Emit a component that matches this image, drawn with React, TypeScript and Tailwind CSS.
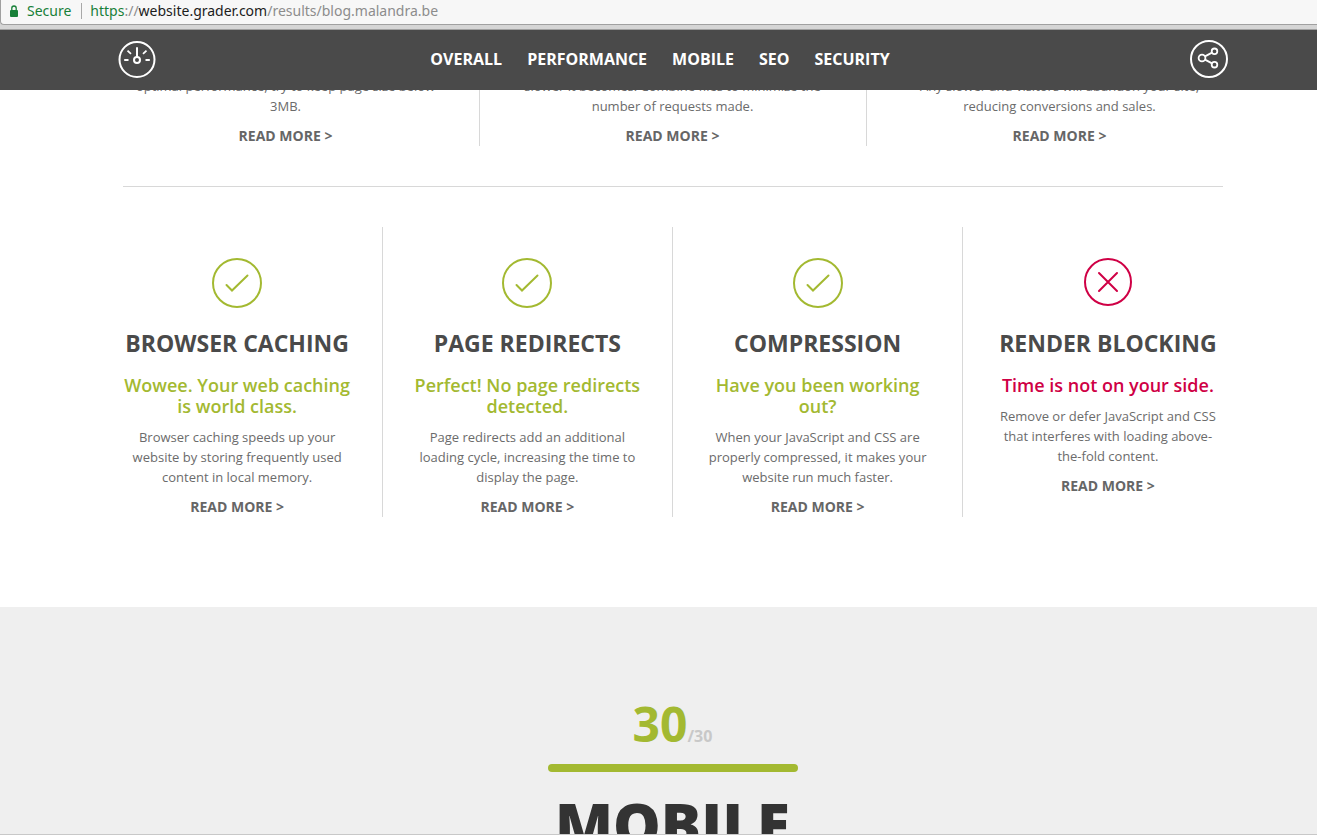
import type { ReactNode } from 'react';

interface CheckItem {
  title: string;
  verdict: string;
  text: string;
  passed: boolean;
}

const navItems = ['Overall', 'Performance', 'Mobile', 'SEO', 'Security'];

const summaries = [
  'optimal performance, try to keep page size below 3MB.',
  'slower it becomes. Combine files to minimize the number of requests made.',
  'Any slower and visitors will abandon your site, reducing conversions and sales.',
];

const checks: CheckItem[] = [
  {
    title: 'Browser Caching',
    verdict: 'Wowee. Your web caching is world class.',
    text: 'Browser caching speeds up your website by storing frequently used content in local memory.',
    passed: true,
  },
  {
    title: 'Page Redirects',
    verdict: 'Perfect! No page redirects detected.',
    text: 'Page redirects add an additional loading cycle, increasing the time to display the page.',
    passed: true,
  },
  {
    title: 'Compression',
    verdict: 'Have you been working out?',
    text: 'When your JavaScript and CSS are properly compressed, it makes your website run much faster.',
    passed: true,
  },
  {
    title: 'Render Blocking',
    verdict: 'Time is not on your side.',
    text: 'Remove or defer JavaScript and CSS that interferes with loading above-the-fold content.',
    passed: false,
  },
];

function LockIcon() {
  return (
    <svg width="10" height="12" viewBox="0 0 10 12" fill="none" aria-hidden="true">
      <rect x="1" y="5" width="8" height="7" rx="1" fill="#188038" />
      <path d="M2.8 5.5V3.2a2.2 2.2 0 0 1 4.4 0v2.3" stroke="#188038" strokeWidth="1.3" />
    </svg>
  );
}

function GaugeIcon() {
  return (
    <svg width="38" height="38" viewBox="0 -1 38 38" fill="none" stroke="#fff" strokeWidth="2" aria-hidden="true">
      <circle cx="19" cy="18.5" r="17.5" />
      <circle cx="19" cy="19" r="3" />
      <path d="M19 6.3V16" />
      <path d="M6.2 19h4.3M27.500 19h4.300M9.500 9.700l3.500 3.200M28.500 9.700L25 12.900" strokeWidth="1.8" />
    </svg>
  );
}

function ShareIcon() {
  return (
    <svg width="38" height="38" viewBox="0 0 38 38" fill="none" stroke="#fff" aria-hidden="true">
      <circle cx="19" cy="19" r="18" strokeWidth="2" />
      <g strokeWidth="1.8">
        <circle cx="12" cy="18" r="3.4" />
        <circle cx="24.5" cy="11.3" r="2.8" />
        <circle cx="24.5" cy="24.7" r="2.8" />
        <path d="M15 16.400l7-3.800M15 19.600l7 3.800" />
      </g>
    </svg>
  );
}

function PassIcon() {
  return (
    <svg width="50" height="50" viewBox="0 0 50 50" fill="none" stroke="#a3b931" strokeWidth="2" aria-hidden="true">
      <circle cx="25" cy="25" r="24" />
      <path d="M14.5 27l5.500 5.500L35.500 17.500" strokeLinecap="round" />
    </svg>
  );
}

function FailIcon() {
  return (
    <svg width="48" height="48" viewBox="0 0 48 48" fill="none" stroke="#cf0045" strokeWidth="2" aria-hidden="true">
      <circle cx="24" cy="24" r="23" />
      <path d="M15 15l18 18M33 15L15 33" strokeLinecap="round" />
    </svg>
  );
}

function AddressBar() {
  return (
    <div className="border-b border-[#a0a0a0] bg-[#d5d5d5] pb-1">
      <div className="flex h-[25px] items-center rounded-bl-sm border-b border-l border-[#a0a0a0] bg-[#f7f7f7] pb-[3px] pl-2 font-['Noto_Sans',sans-serif] text-sm leading-5">
        <LockIcon />
        <span className="ml-2 text-[#188038]">Secure</span>
        <span className="mr-2 ml-2.5 h-4 w-px bg-[#a8a8a8]" />
        <span className="text-[#8c8c8c]">
          <span className="text-[#188038]">https</span>://
          <span className="text-[#1c1c1c]">website.grader.com</span>/results/blog.malandra.be
        </span>
      </div>
    </div>
  );
}

function Header() {
  return (
    <header className="relative z-10 bg-[#4a4a4a] pl-7">
      <div className="mx-auto flex h-[60px] max-w-[1110px] items-center justify-between pb-0.5">
        <a href="#top" aria-label="Website Grader">
          <GaugeIcon />
        </a>
        <nav className="flex gap-[25px] pr-[25px]">
          {navItems.map((item) => (
            <a key={item} href={`#${item.toLowerCase()}`} className="text-base font-bold text-white uppercase">
              {item}
            </a>
          ))}
        </nav>
        <button type="button" aria-label="Share">
          <ShareIcon />
        </button>
      </div>
    </header>
  );
}

function Description({ children }: { children: ReactNode }) {
  return (
    <>
      <p className="text-[13px] leading-5 text-[#6b6b6b]">{children}</p>
      <a href="#more" className="mt-2.5 block text-sm leading-5 font-bold text-[#666] uppercase">
        Read more &gt;
      </a>
    </>
  );
}

function CheckColumn({ item }: { item: CheckItem }) {
  return (
    <article className="flex-1 border-r border-[#d8d8d8] px-[30px] pt-[31px] last:border-r-0">
      <div className="flex h-[50px] justify-center">{item.passed ? <PassIcon /> : <FailIcon />}</div>
      <h3 className="mt-5 text-[23px] leading-[30px] font-bold whitespace-nowrap text-[#4a4a4a] uppercase">
        {item.title}
      </h3>
      <p
        className={`mt-[17px] mb-2.5 text-lg leading-[21px] font-semibold ${
          item.passed ? 'text-[#a3b931]' : 'text-[#cf0045]'
        }`}
      >
        {item.verdict}
      </p>
      <Description>{item.text}</Description>
    </article>
  );
}

export default function App() {
  return (
    <div className="flex h-screen flex-col overflow-hidden border-b border-[#c8c8c8] bg-white font-['Open_Sans',sans-serif] text-center">
      <AddressBar />
      <Header />
      <main className="flex min-h-0 flex-1 flex-col">
        {/* the first row is scrolled partly under the header */}
        <section className="-mt-3.5 shrink-0 pb-[90px] pl-7">
          <div className="mx-auto flex max-w-[1160px]">
            {summaries.map((text) => (
              <div key={text} className="flex-1 border-r border-[#d8d8d8] px-[30px] last:border-r-0">
                <Description>{text}</Description>
              </div>
            ))}
          </div>
          <hr className="mx-auto my-10 max-w-[1100px] border-[#d8d8d8]" />
          <div className="mx-auto flex max-w-[1160px]">
            {checks.map((item) => (
              <CheckColumn key={item.title} item={item} />
            ))}
          </div>
        </section>
        <section id="mobile" className="min-h-0 flex-1 overflow-hidden bg-[#efefef] pt-[90px] pl-7">
          <p className="text-5xl leading-[54px] font-bold text-[#a3b931]">
            30<span className="text-base text-[#c8c8c8]">/30</span>
          </p>
          <div className="mx-auto mt-[13px] h-2 w-[250px] rounded-full bg-[#a3b931]" />
          <h2 className="mt-4 text-6xl leading-[72px] font-extrabold text-[#333] uppercase">Mobile</h2>
        </section>
      </main>
    </div>
  );
}
